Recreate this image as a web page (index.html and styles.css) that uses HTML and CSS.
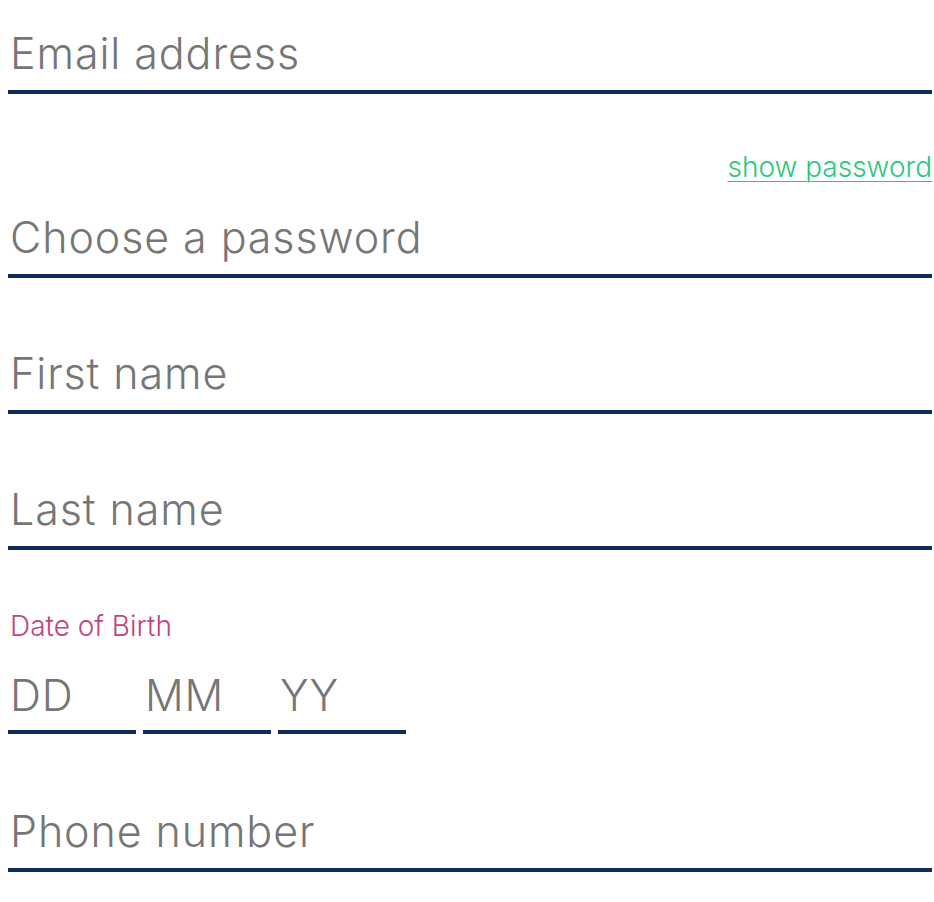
FILE: index.html
```html
<!DOCTYPE html>
<html lang="en">
<head>
<meta charset="utf-8">
<title>Sign up</title>
<link rel="stylesheet" href="styles.css">
</head>
<body>
<form class="form">
  <div class="field field-email"><span class="placeholder">Email address</span></div>
  <div class="show-row"><a class="show-link" href="#">show password</a></div>
  <div class="field field-password"><span class="placeholder">Choose a password</span></div>
  <div class="field field-gap"><span class="placeholder">First name</span></div>
  <div class="field field-gap"><span class="placeholder">Last name</span></div>
  <div class="dob-label">Date of Birth</div>
  <div class="dob-row">
    <div class="field dob-part"><span class="placeholder">DD</span></div>
    <div class="field dob-part"><span class="placeholder">MM</span></div>
    <div class="field dob-part"><span class="placeholder">YY</span></div>
  </div>
  <div class="field field-phone"><span class="placeholder">Phone number</span></div>
</form>
</body>
</html>
```
FILE: styles.css
```css
* { box-sizing: border-box; }
html, body { margin: 0; padding: 0; background: #ffffff; }
body { font-family: Inter, "Noto Sans", sans-serif; }
.form {
  display: flex;
  flex-direction: column;
  padding: 0 2px 0 8px;
}
.field {
  font-size: 43px;
  font-weight: 300;
  line-height: 50px;
  letter-spacing: 0.9px;
  color: #767676;
  padding: 0 0 12px 2px;
  border-bottom: 4px solid #0d2d5c;
}
.field-email { margin-top: 28px; }
.show-row {
  margin-top: 56px;
  text-align: right;
  font-size: 28px;
  font-weight: 300;
  line-height: 34px;
}
.show-link {
  color: #2ac87c;
  text-decoration: underline;
  text-underline-offset: 4px;
  text-decoration-thickness: 1px;
}
.field-password { margin-top: 28px; }
.field-gap { margin-top: 70px; }
.dob-label {
  margin-top: 59px;
  padding-left: 2px;
  font-size: 28px;
  font-weight: 300;
  line-height: 34px;
  color: #c2447e;
}
.dob-row {
  margin-top: 27px;
  display: flex;
  gap: 7px;
}
.dob-part { width: 128px; padding-bottom: 10px; }
.field-phone { margin-top: 72px; }
```
